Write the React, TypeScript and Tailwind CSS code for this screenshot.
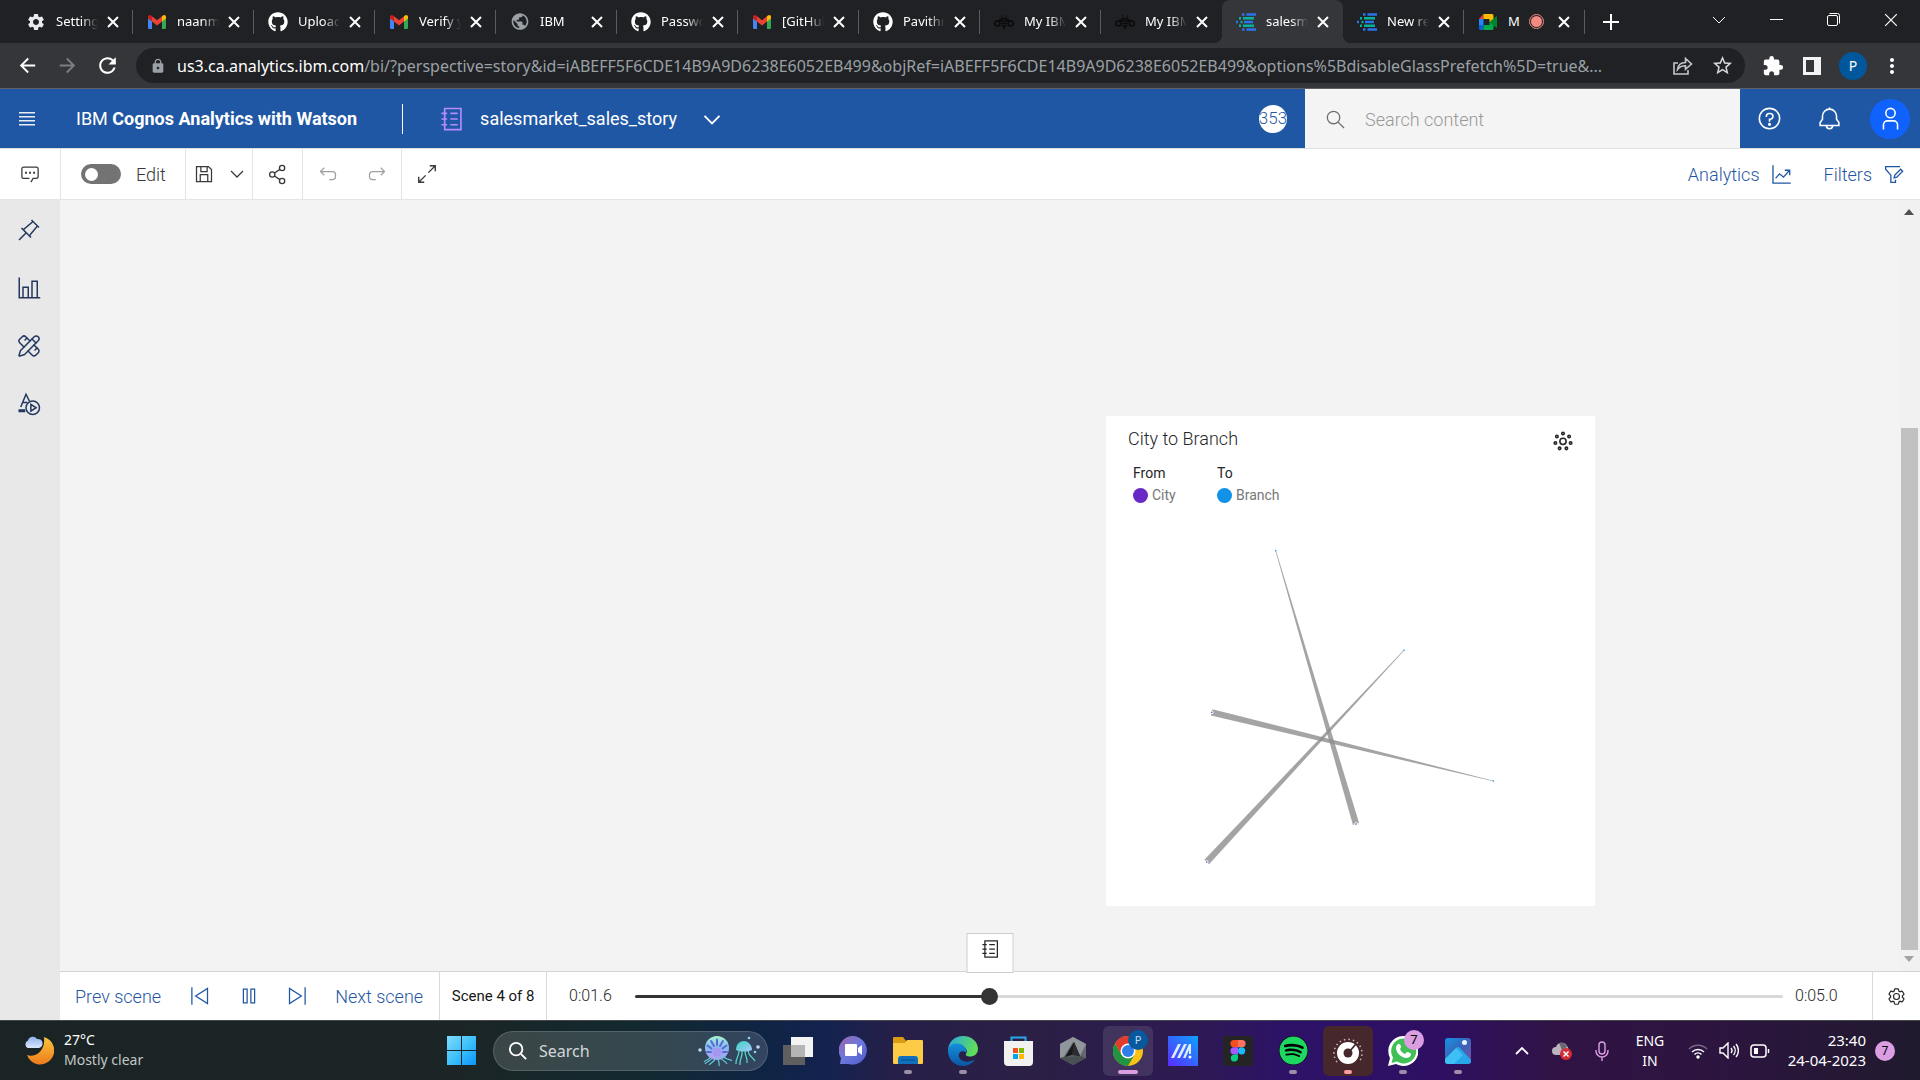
import type { ReactNode } from "react";
import { FaGithub, FaSpotify } from "react-icons/fa";
import { MdSettings, MdLock, MdExtension, MdStarBorder, MdMoreVert, MdRefresh, MdArrowBack, MdArrowForward, MdPublic } from "react-icons/md";
import { PencilRuler } from "lucide-react";

/* ---------- icon helpers ---------- */

function Line({ size = 20, w = 2, className = "", children }: { size?: number; w?: number; className?: string; children: ReactNode }) {
  return (
    <svg width={size} height={size} viewBox="0 0 32 32" fill="none" stroke="currentColor" strokeWidth={w} className={"shrink-0 " + className} aria-hidden="true">
      {children}
    </svg>
  );
}

function Close({ size = 12, w = 2 }: { size?: number; w?: number }) {
  return (
    <svg width={size} height={size} viewBox="0 0 12 12" stroke="currentColor" strokeWidth={w} aria-hidden="true">
      <path d="M1 1l10 10M11 1L1 11" />
    </svg>
  );
}

function GmailIcon() {
  return (
    <svg width="18" height="14" viewBox="0 0 18 14" aria-hidden="true">
      <path d="M0 3.5h4V14H1.2A1.2 1.2 0 0 1 0 12.8z" fill="#4285f4" />
      <path d="M14 3.5h4v9.3a1.2 1.2 0 0 1-1.2 1.2H14z" fill="#34a853" />
      <path d="M4 1.3l5 3.9 5-3.9v5.3L9 10.4 4 6.6z" fill="#ea4335" />
      <path d="M0 1.8C0 .2 1.9-.6 3.2.6L4 1.3v5.3L0 3.6z" fill="#c5221f" />
      <path d="M18 1.8C18 .2 16.1-.6 14.8.6L14 1.3v5.3l4-3z" fill="#fbbc04" />
    </svg>
  );
}

function BeeIcon() {
  return (
    <svg width="20" height="14" viewBox="0 0 20 14" fill="none" stroke="#0a0a0a" strokeWidth="1.5" aria-hidden="true">
      <path d="M7 1h1M12 1h1M7 3.5h6M6 6h8M7 8.5h6M7.5 11h5M9 13.2h2" strokeWidth="1.7" />
      <circle cx="3.3" cy="8.5" r="2.5" />
      <circle cx="16.7" cy="8.5" r="2.5" />
      <path d="M4 6l4-2M16 6l-4-2" />
    </svg>
  );
}

function CognosIcon() {
  return (
    <svg width="20" height="18" viewBox="0 0 20 18" fill="none" strokeWidth="2.4" aria-hidden="true">
      <path d="M6 1.5h2.5M10.5 1.5H20M0 9h2M8 9h9M6 16.5h2.5M10.5 16.5H20" stroke="#2c74ee" />
      <path d="M3 5.2h2M7 5.2h11M4.5 9h2M3 12.8h2M7 12.8h11" stroke="#05b39c" />
    </svg>
  );
}

function MeetIcon() {
  return (
    <svg width="18" height="16" viewBox="0 0 18 16" aria-hidden="true">
      <path d="M0 5l4.5-5v5z" fill="#ea4335" />
      <path d="M4.5 0H13a1.5 1.5 0 0 1 1.5 1.5V8h-4V5h-6z" fill="#fbbc04" />
      <path d="M0 5h4.5v6H0z" fill="#2684fc" />
      <path d="M0 11h4.5v5h-3A1.5 1.5 0 0 1 0 14.5z" fill="#0066da" />
      <path d="M4.5 11h6V8h4v6.5A1.5 1.5 0 0 1 13 16H4.5z" fill="#00ac47" />
      <path d="M10.5 8L17 2.5c.5-.4 1 0 1 .5v10c0 .5-.5.9-1 .5z" fill="#00832d" />
    </svg>
  );
}

function StoryIcon({ size }: { size: number }) {
  return (
    <Line size={size}>
      <path d="M7 3h20v26H7z" />
      <path d="M3 9h7M3 16h7M3 23h7M14 9h9M14 16h9M14 23h9" />
    </Line>
  );
}

/* ---------- browser tabs ---------- */

const tabs: { icon: ReactNode; title: string; active?: boolean; recording?: boolean }[] = [
  { icon: <MdSettings size={20} className="text-[#e8eaed]" />, title: "Settings" },
  { icon: <GmailIcon />, title: "naanm" },
  { icon: <FaGithub size={20} />, title: "Upload" },
  { icon: <GmailIcon />, title: "Verify y" },
  { icon: <MdPublic size={21} className="text-[#9aa0a6]" />, title: "IBM" },
  { icon: <FaGithub size={20} />, title: "Passwo" },
  { icon: <GmailIcon />, title: "[GitHub" },
  { icon: <FaGithub size={20} />, title: "Pavithr" },
  { icon: <BeeIcon />, title: "My IBM" },
  { icon: <BeeIcon />, title: "My IBM" },
  { icon: <CognosIcon />, title: "salesm", active: true },
  { icon: <CognosIcon />, title: "New re" },
  { icon: <MeetIcon />, title: "M", recording: true },
];

function TabStrip() {
  return (
    <div className="flex h-[43px] bg-[#202124] pl-3 text-white">
      {tabs.map((t, i) => {
        const sep = !t.active && !tabs[i + 1]?.active;
        return (
          <div
            key={i}
            className={
              "flex w-[121px] shrink-0 items-center pl-[14px] " +
              (t.active
                ? "relative rounded-t-lg bg-[#35363a] before:absolute before:bottom-0 before:-left-2 before:size-2 before:bg-[radial-gradient(circle_at_0_0,#202124_8px,#35363a_8px)] after:absolute after:-right-2 after:bottom-0 after:size-2 after:bg-[radial-gradient(circle_at_100%_0,#202124_8px,#35363a_8px)]"
                : "")
            }
          >
            <span className="flex w-5 shrink-0 justify-center">{t.icon}</span>
            <span
              className={
                "ml-[10px] overflow-hidden text-[13px] whitespace-nowrap " +
                (t.recording ? "w-[13px]" : "w-[42px] [mask-image:linear-gradient(to_right,black_60%,transparent)]")
              }
            >
              {t.title}
            </span>
            {t.recording && (
              <span className="ml-2 flex size-[15px] shrink-0 items-center justify-center rounded-full border border-[#f28b82]">
                <span className="size-[11px] rounded-full bg-[#f28b82]" />
              </span>
            )}
            <button className={"flex shrink-0 " + (t.recording ? "ml-[14px]" : "ml-[9px]")} aria-label={"Close " + t.title}>
              <Close />
            </button>
            {sep && <span className="ml-auto h-6 w-px bg-[#5b5c60]" />}
          </div>
        );
      })}
      <button className="ml-[18px] flex items-center" aria-label="New tab">
        <svg width="16" height="16" viewBox="0 0 16 16" stroke="white" strokeWidth="2" aria-hidden="true">
          <path d="M8 0v16M0 8h16" />
        </svg>
      </button>
      <div className="ml-auto flex items-center gap-[44px] pr-[22px] pb-1">
        <button aria-label="Search tabs">
          <svg width="14" height="8" viewBox="0 0 14 8" fill="none" stroke="white" aria-hidden="true"><path d="M1 1l6 6 6-6" /></svg>
        </button>
        <button aria-label="Minimize">
          <svg width="13" height="2" viewBox="0 0 13 2" aria-hidden="true"><path d="M0 0h13v1H0z" fill="white" /></svg>
        </button>
        <button aria-label="Restore">
          <svg width="13" height="13" viewBox="0 0 13 13" fill="none" stroke="white" aria-hidden="true">
            <rect x=".5" y="2.5" width="10" height="10" rx="1.5" />
            <path d="M2.5 .5h8a2 2 0 0 1 2 2v8" />
          </svg>
        </button>
        <button aria-label="Close window"><Close size={14} w={1} /></button>
      </div>
    </div>
  );
}

function AddressBar() {
  return (
    <div className="flex h-[46px] items-center border-b border-[#5f6063] bg-[#35363a] pr-4 pl-4 text-white">
      <button aria-label="Back"><MdArrowBack size={23} /></button>
      <button className="ml-[17px] text-[#7d7e82]" aria-label="Forward"><MdArrowForward size={23} /></button>
      <button className="ml-4" aria-label="Reload"><MdRefresh size={25} /></button>
      <div className="ml-4 flex h-[35px] min-w-0 flex-1 items-center rounded-full bg-[#202124] pr-[11px] pl-[14px]">
        <MdLock size={16} className="shrink-0 text-[#9aa0a6]" />
        <span className="ml-[11px] min-w-0 flex-1 truncate text-[16px] text-[#9aa0a6]">
          <span className="text-white">us3.ca.analytics.ibm.com</span>
          /bi/?perspective=story&amp;id=iABEFF5F6CDE14B9A9D6238E6052EB499&amp;objRef=iABEFF5F6CDE14B9A9D6238E6052EB499&amp;options%5BdisableGlassPrefetch%5D=true&amp;...
        </span>
        <button className="ml-4 text-[#c4c7ca]" aria-label="Share page">
          <svg width="20" height="18" viewBox="0 0 20 18" fill="none" stroke="currentColor" strokeWidth="1.6" aria-hidden="true">
            <path d="M5 6H1v11h14v-4" />
            <path d="M4.5 12.5C5 8 8 5.5 12.5 5.5V1.500l6 5.500-6 5.300V8.800c-3.500 0-6 1-8 3.700z" />
          </svg>
        </button>
        <button className="ml-[18px] text-[#d5d7da]" aria-label="Bookmark"><MdStarBorder size={23} /></button>
      </div>
      <button className="ml-[17px]" aria-label="Extensions"><MdExtension size={22} /></button>
      <button className="ml-[19px]" aria-label="Side panel">
        <svg width="18" height="18" viewBox="0 0 18 18" aria-hidden="true"><path d="M0 0h18v18H0z" fill="#f1f3f4" /><path d="M3 3h8v12H3z" fill="#35363a" /></svg>
      </button>
      <button className="ml-[18px] flex size-7 items-center justify-center rounded-full bg-[#01579b] text-[14px]">P</button>
      <button className="ml-[13px]" aria-label="Menu"><MdMoreVert size={24} /></button>
    </div>
  );
}

/* ---------- application ---------- */

function AppHeader() {
  return (
    <header className="flex h-[60px] items-stretch border-b border-[#e0e0e0] bg-[#1f57a4] text-white">
      <button className="ml-[19px] flex items-center" aria-label="Open menu">
        <svg width="16" height="14" viewBox="0 0 16 14" aria-hidden="true" fill="white" opacity=".9">
          <path d="M0 0h16v1.5H0zM0 4h16v1.5H0zM0 8h16v1.5H0zM0 12h16v1.5H0z" />
        </svg>
      </button>
      <h1 className="ml-[41px] flex items-center text-[18px] whitespace-pre"><span>IBM </span><span className="font-bold">Cognos Analytics with Watson</span></h1>
      <span className="ml-[45px] h-[30px] w-px self-center bg-white" />
      <button className="ml-[36px] flex items-center">
        <span className="text-[#b58cff]"><StoryIcon size={26} /></span>
        <span className="ml-[15px] text-[18px]">salesmarket_sales_story</span>
        <Line size={20} w={3} className="ml-[25px]"><path d="M4 11l12 12 12-12" /></Line>
      </button>
      <span className="mr-[18px] ml-auto flex size-7 items-center justify-center self-center overflow-hidden rounded-full bg-white text-[17px] font-light text-[#1f57a4]">353</span>
      <label className="flex w-[435px] items-center bg-[#f4f4f4] pt-[2px] pl-5 text-[#6f6f6f]">
        <Line size={21} w={2}><circle cx="13" cy="13" r="9.5" /><path d="M20 20l9 9" /></Line>
        <input aria-label="Search content" placeholder="Search content" className="ml-[19px] min-w-0 flex-1 bg-transparent text-[18px] font-light outline-none placeholder:text-[#999999]" />
      </label>
      <button className="ml-[17px] flex items-center" aria-label="Help">
        <Line size={25}>
          <circle cx="16" cy="16" r="13" />
          <path d="M12 14v-1a3.5 3.5 0 0 1 3.5-3.5h1.2a3.5 3.5 0 0 1 0 7.5H16v3" />
          <circle cx="16" cy="23.5" r="1" fill="currentColor" />
        </Line>
      </button>
      <button className="ml-[35px] flex items-center" aria-label="Notifications">
        <Line size={25}>
          <path d="M16 2v3M4 25v-4l3-4v-4a9 9 0 0 1 18 0v4l3 4v4zM12 25a4 4 0 0 0 8 0" />
        </Line>
      </button>
      <button className="mr-[10px] ml-[28px] flex size-10 items-center justify-center self-center rounded-full bg-[#0f62fe]" aria-label="Account">
        <Line size={25}><circle cx="16" cy="9" r="6" /><path d="M7 30v-6a5 5 0 0 1 5-5h8a5 5 0 0 1 5 5v6" /></Line>
      </button>
    </header>
  );
}

function Toolbar() {
  return (
    <div className="flex h-[51px] items-stretch border-b border-[#e4e4e4] bg-white text-[#393939]">
      <button className="flex w-[60px] items-center justify-center" aria-label="Comments">
        <Line size={20}>
          <path d="M17.5 29L21 23h5a3 3 0 0 0 3-3V8a3 3 0 0 0-3-3H6a3 3 0 0 0-3 3v12a3 3 0 0 0 3 3h9" />
          <path d="M8 14h3M14.5 14h3M21 14h3" strokeWidth="3" />
        </Line>
      </button>
      <label className="flex w-[125px] items-center border-l border-[#e4e4e4] pl-5 text-[18px] font-light">
        <input
          type="checkbox"
          role="switch"
          className="flex h-5 w-10 appearance-none items-center rounded-full bg-[#737373] pl-1 before:size-[13px] before:rounded-full before:bg-white"
        />
        <span className="ml-[15px]">Edit</span>
      </label>
      <div className="flex w-[67px] items-center border-l border-[#e4e4e4] pl-2">
        <button aria-label="Save">
          <Line size={20}><path d="M4 4h19l5 5v19H4zM11 4v8h10V4M10 28V17h12v11" /></Line>
        </button>
        <button className="ml-[15px]" aria-label="Save options">
          <Line size={16} w={2.5}><path d="M4 10l12 12 12-12" /></Line>
        </button>
      </div>
      <button className="flex w-[50px] items-center justify-center border-l border-[#e4e4e4]" aria-label="Share">
        <Line size={21}>
          <circle cx="8" cy="16" r="4" /><circle cx="23" cy="6" r="4" /><circle cx="23" cy="26" r="4" />
          <path d="M11.3 13.8l8.4-5.6M11.3 18.2l8.4 5.6" />
        </Line>
      </button>
      <div className="flex w-[99px] items-center border-l border-[#e4e4e4] pl-[15px] text-[#a0a0a0]">
        <button aria-label="Undo"><Line size={20}><path d="M10 6L4 12l6 6M4 12h19a5 5 0 0 1 5 5v3a5 5 0 0 1-5 5h-5" /></Line></button>
        <button className="ml-[29px]" aria-label="Redo"><Line size={20}><path d="M22 6l6 6-6 6M28 12H9a5 5 0 0 0-5 5v3a5 5 0 0 0 5 5h5" /></Line></button>
      </div>
      <button className="flex w-[51px] items-center justify-center border-l border-[#e4e4e4]" aria-label="Full screen">
        <Line size={22}><path d="M20 4h8v8M28 4L18 14M4 20v8h8M4 28l10-10" /></Line>
      </button>
      <button className="ml-auto flex items-center text-[18px] font-light text-[#1f57a4]">
        Analytics
        <Line size={21} className="ml-[11px]"><path d="M3 2v27h27M7 22l6-7 6 5 9-10M21 9.5h7.500V17" /></Line>
      </button>
      <button className="mr-4 ml-[32px] flex items-center text-[18px] font-light text-[#1f57a4]">
        Filters
        <Line size={21} className="ml-[11px]">
          <path d="M26 4H4v4l8 9v11h7v-4" />
          <path d="M17 21l1-4L27 8l3 3-9 9z" />
        </Line>
      </button>
    </div>
  );
}

function Rail() {
  return (
    <nav className="flex w-[60px] shrink-0 flex-col items-center gap-[34px] bg-[#e8e8e8] pt-[18px] pr-[2px] text-[#22375e]">
      <button className="flex h-6 items-center" aria-label="Pin">
        <svg width="24" height="24" viewBox="0 0 32 32" fill="currentColor" aria-hidden="true">
          <path d="M28.59 13.31L30 11.9 20 2l-1.31 1.42 1.18 1.18-11.49 9.72-1.72-1.71L5.25 14l5.66 5.68L2 28.58 3.41 30l8.91-8.91L18 26.75l1.39-1.42-1.71-1.71 9.72-11.49zM16.26 22.2L9.8 15.74 21.29 6 26 10.71z" />
        </svg>
      </button>
      <button className="flex h-6 items-center" aria-label="Visualizations">
        <Line size={24}><path d="M3 2v27h28M8 29V15h7v14M20 29V7h7v22" /></Line>
      </button>
      <button className="flex h-6 items-center" aria-label="Widgets"><PencilRuler size={24} strokeWidth={1.5} /></button>
      <button className="flex h-6 items-center" aria-label="Animations">
        <Line size={24}>
          <path d="M5 20L12 3l4.5 9M8 14h6" />
          <path d="M2 25h9" strokeWidth="4" />
          <circle cx="21" cy="21" r="9" /><path d="M18.5 16.5v9l7-4.5z" />
        </Line>
      </button>
    </nav>
  );
}

const links = [
  { tip: [169.7, 134.7], base: [250, 408] },
  { tip: [298, 234.3], base: [100.7, 446] },
  { tip: [387.3, 365], base: [105.7, 296.3] },
];

function ChartCard() {
  return (
    <section className="relative flex h-[490px] w-[489px] flex-col bg-white">
      <div className="flex items-center justify-between pt-[9px] pr-[22px] pl-[22px] text-[18px] text-[#262626]">
        <h2 className="font-light">City to Branch</h2>
        <svg width="20" height="20" viewBox="0 0 32 32" fill="none" stroke="#262626" strokeWidth="2.5" aria-hidden="true" className="mt-1">
          <circle cx="16" cy="16.5" r="5" />
          {[0, 1, 2, 3, 4, 5, 6].map((i) => {
            const a = (i * 2 * Math.PI) / 7 - Math.PI / 2;
            return <circle key={i} cx={16 + 12.5 * Math.cos(a)} cy={16.5 + 12.5 * Math.sin(a)} r="2" />;
          })}
        </svg>
      </div>
      <div className="mt-[10px] flex pl-[27px] text-[14px] leading-[22px]">
        <div className="w-[84px]">
          <div className="text-[#262626]">From</div>
          <div className="flex items-center text-[#777777]"><span className="mr-1 size-[15px] rounded-full bg-[#6929c4]" />City</div>
        </div>
        <div>
          <div className="text-[#262626]">To</div>
          <div className="flex items-center text-[#777777]"><span className="mr-1 size-[15px] rounded-full bg-[#1192e8]" />Branch</div>
        </div>
      </div>
      <svg className="absolute inset-0" width="489" height="490" viewBox="0 0 489 490" role="img" aria-label="City to Branch network">
        {links.map(({ tip, base }, i) => {
          const dx = base[0] - tip[0];
          const dy = base[1] - tip[1];
          const l = Math.hypot(dx, dy);
          const nx = -dy / l;
          const ny = dx / l;
          const corners = [
            [tip[0] + nx * 0.3, tip[1] + ny * 0.3],
            [base[0] + nx * 3.2, base[1] + ny * 3.2],
            [base[0] - nx * 3.2, base[1] - ny * 3.2],
            [tip[0] - nx * 0.3, tip[1] - ny * 0.3],
          ];
          return (
            <g key={i}>
              <polygon points={corners.map((c) => c.join(",")).join(" ")} fill="#8d8d8d" opacity=".8" />
              <circle cx={base[0]} cy={base[1]} r="1.8" fill="white" />
              <circle cx={base[0]} cy={base[1]} r=".8" fill="#6929c4" />
              <circle cx={tip[0]} cy={tip[1]} r=".8" fill="#1192e8" />
            </g>
          );
        })}
      </svg>
    </section>
  );
}

function Player() {
  return (
    <div className="flex h-[49px] items-stretch border-t border-[#d4d4d4] bg-white text-[#1f57a4]">
      <button className="ml-[15px] text-[18px] font-light">Prev scene</button>
      <button className="ml-[29px] flex items-center" aria-label="Previous"><Line size={20}><path d="M3 2v28M28 4v24L9 16z" /></Line></button>
      <button className="ml-[29px] flex items-center" aria-label="Pause"><Line size={20}><path d="M7 5h6v22H7zM19 5h6v22h-6z" /></Line></button>
      <button className="ml-[28px] flex items-center" aria-label="Next"><Line size={20}><path d="M29 2v28M4 4v24l19-12z" /></Line></button>
      <button className="mr-4 ml-[28px] text-[18px] font-light">Next scene</button>
      <span className="flex w-[108px] items-center justify-center border-x border-[#d9d9d9] text-[15px] whitespace-nowrap text-[#161616]">Scene 4 of 8</span>
      <span className="ml-[22px] flex w-[66px] items-center text-[16px] font-light text-[#262626]">0:01.6</span>
      <input
        type="range"
        aria-label="Timeline"
        min={0}
        max={5}
        step={0.01}
        defaultValue={1.53}
        className="h-[3px] min-w-0 flex-1 appearance-none self-center rounded-full bg-[linear-gradient(to_right,#333333_31%,#d8d8d8_31%)] [&::-webkit-slider-thumb]:size-[17px] [&::-webkit-slider-thumb]:appearance-none [&::-webkit-slider-thumb]:rounded-full [&::-webkit-slider-thumb]:bg-[#333333]"
      />
      <span className="ml-3 flex w-[77px] items-center text-[16px] font-light text-[#262626]">0:05.0</span>
      <button className="flex w-[48px] items-center justify-center border-l border-[#d9d9d9] text-[#262626]" aria-label="Settings">
        <svg width="19" height="19" viewBox="0 0 32 32" fill="currentColor" aria-hidden="true">
          <path d="M27,16.76c0-.25,0-.5,0-.76s0-.51,0-.77l1.92-1.68A2,2,0,0,0,29.3,11L26.94,7a2,2,0,0,0-1.73-1,2,2,0,0,0-.64.1l-2.43.82a11.35,11.35,0,0,0-1.31-.75l-.51-2.52a2,2,0,0,0-2-1.61H13.64a2,2,0,0,0-2,1.61l-.51,2.52a11.48,11.48,0,0,0-1.32.75L7.43,6.06A2,2,0,0,0,6.79,6,2,2,0,0,0,5.06,7L2.7,11a2,2,0,0,0,.41,2.51L5,15.24c0,.25,0,.5,0,.76s0,.51,0,.77L3.11,18.45A2,2,0,0,0,2.7,21L5.06,25a2,2,0,0,0,1.73,1,2,2,0,0,0,.64-.1l2.43-.82a11.35,11.35,0,0,0,1.31.75l.51,2.52a2,2,0,0,0,2,1.61h4.72a2,2,0,0,0,2-1.61l.51-2.52a11.48,11.48,0,0,0,1.32-.75l2.42.82a2,2,0,0,0,.64.1,2,2,0,0,0,1.73-1L29.3,21a2,2,0,0,0-.41-2.51ZM25.21,24l-3.43-1.16a8.86,8.86,0,0,1-2.71,1.57L18.36,28H13.64l-.71-3.55a9.36,9.36,0,0,1-2.7-1.57L6.79,24,4.43,20l2.72-2.4a8.9,8.9,0,0,1,0-3.13L4.43,12,6.79,8l3.43,1.16a8.86,8.86,0,0,1,2.71-1.57L13.64,4h4.72l.71,3.55a9.36,9.36,0,0,1,2.7,1.57L25.21,8,27.57,12l-2.72,2.4a8.9,8.9,0,0,1,0,3.13L27.57,20Z" />
          <path d="M16,22a6,6,0,1,1,6-6A5.94,5.94,0,0,1,16,22Zm0-10a3.91,3.91,0,0,0-4,4,3.91,3.91,0,0,0,4,4,3.91,3.91,0,0,0,4-4A3.91,3.91,0,0,0,16,12Z" />
        </svg>
      </button>
    </div>
  );
}

function Scrollbar() {
  return (
    <div className="flex w-5 shrink-0 flex-col items-center bg-[#f1f1f1] py-[9px] pr-[2px]">
      <svg width="10" height="6" viewBox="0 0 10 6" aria-hidden="true"><path d="M0 6l5-6 5 6z" fill="#505050" /></svg>
      <span className="grow-[213]" />
      <span className="w-[17px] grow-[523] bg-[#c1c1c1]" />
      <svg width="10" height="6" viewBox="0 0 10 6" className="mt-[6px]" aria-hidden="true"><path d="M0 0l5 6 5-6z" fill="#a3a3a3" /></svg>
    </div>
  );
}

/* ---------- taskbar ---------- */

function WeatherIcon() {
  return (
    <svg width="30" height="30" viewBox="0 0 30 30" aria-hidden="true">
      <defs>
        <linearGradient id="moon" x1="0" y1="0" x2="0" y2="1"><stop offset="0" stopColor="#f8c63c" /><stop offset="1" stopColor="#ee7a1c" /></linearGradient>
        <linearGradient id="cloud" x1="0" y1="0" x2="0" y2="1"><stop offset="0" stopColor="#8fb0f0" /><stop offset="1" stopColor="#dbe6fb" /></linearGradient>
      </defs>
      <path d="M20 2a14 14 0 1 1-17 18c8 3 19-4 17-18z" fill="url(#moon)" />
      <path d="M4 13a4 4 0 0 1 0-7.500A5 5 0 0 1 13 4a4.500 4.500 0 0 1 2 9z" fill="url(#cloud)" />
    </svg>
  );
}

function JellyIcon() {
  return (
    <svg width="62" height="32" viewBox="0 0 62 32" fill="none" aria-hidden="true">
      <defs>
        <linearGradient id="jelly" x1="0" y1="0" x2="0" y2="1"><stop offset="0" stopColor="#a5f5cf" /><stop offset=".45" stopColor="#86bdf5" /><stop offset="1" stopColor="#b99af2" /></linearGradient>
        <linearGradient id="jelly2" x1="0" y1="0" x2="1" y2="1"><stop offset="0" stopColor="#39d5bd" /><stop offset="1" stopColor="#a8c8ff" /></linearGradient>
      </defs>
      <circle cx="19" cy="13" r="12" fill="url(#jelly)" />
      <path d="M19 10V4.500M16 11l-3-5M13.500 13.500l-4-3M13 17H9M22 11l3-5M24.500 13.500l4-3M25 17h4" stroke="#5a6bcf" strokeWidth="2" strokeLinecap="round" />
      <circle cx="19" cy="17" r="4.5" fill="#a98cf0" opacity=".7" />
      <path d="M14 23c-2 4-5 3-7 6M17 23c0 4-4 4-6 7M20 22c0 5 2 6 1 9M22 21c2 6 5 4 7 8M25 20c2 6 7 3 9 6M12 22c-1 4-4 2-6 5" stroke="#63c9dd" strokeWidth="1.2" />
      <path d="M38 15c0-6 4-9 8-9s8 4 8 9c-5 2-11 2-16 0z" fill="url(#jelly2)" />
      <path d="M41 16c0 6-4 8-3 13M44 16c1 6-3 9-2 14M47 16c0 6 3 7 2 12M50 16c1 6 5 6 7 10" stroke="#56dccb" strokeWidth="1.2" />
      <circle cx="2" cy="15" r="1.8" fill="#b8dcf5" /><circle cx="60" cy="12" r="1.8" fill="#b8dcf5" /><circle cx="51" cy="3" r="1.3" fill="#91cfe8" /><circle cx="57" cy="17" r="1.3" fill="#91cfe8" />
    </svg>
  );
}

function WhatsAppIcon() {
  return (
    <svg width="30" height="30" viewBox="0 0 30 30" aria-hidden="true">
      <path d="M15 0a15 15 0 1 1-7 28L0 30l2-8A15 15 0 0 1 15 0z" fill="white" />
      <path d="M15 2.5a12.5 12.5 0 1 1-6 23L3.5 27 5 21.5A12.5 12.5 0 0 1 15 2.5z" fill="#43bf58" />
      <path d="M10 8c2-1 3 2 3 3s-1 2-1 2c1 3 3 4 5 5l2-2c1 0 4 1 4 2 0 3-3 4-5 4-6-1-10-6-10-10 0-2 1-3 2-4z" fill="white" />
    </svg>
  );
}

function Pill({ color = "bg-[#9b8ea9]", wide = false }: { color?: string; wide?: boolean }) {
  return <span className={"absolute bottom-[6px] left-1/2 h-1 -translate-x-1/2 rounded-full " + (wide ? "w-5 " : "w-2 ") + color} />;
}

const apps: { name: string; icon: ReactNode; mark?: ReactNode; box?: string; badge?: ReactNode }[] = [
  {
    name: "Task view",
    icon: (
      <svg width="30" height="28" viewBox="0 0 30 28" aria-hidden="true">
        <path d="M8 0h22v20H8z" fill="#f3f3f3" /><path d="M0 8h22v20H0z" fill="#5f5f5f" /><path d="M8 8h14v12H8z" fill="#b5b5b5" />
      </svg>
    ),
  },
  {
    name: "Chat",
    icon: (
      <svg width="29" height="29" viewBox="0 0 29 29" aria-hidden="true">
        <defs><linearGradient id="chat" x1="0" y1="0" x2="1" y2="1"><stop offset="0" stopColor="#a066a8" /><stop offset=".5" stopColor="#6b78dd" /><stop offset="1" stopColor="#5059c9" /></linearGradient></defs>
        <path d="M14.5 0a14.3 14.3 0 1 1-5 28H1l1-6A14.3 14.3 0 0 1 14.5 0z" fill="url(#chat)" />
        <rect x="6" y="8" width="12" height="12" rx="1" fill="white" /><path d="M19 12l4-3v10l-4-3z" fill="white" />
      </svg>
    ),
  },
  {
    name: "File Explorer",
    mark: <Pill />,
    icon: (
      <svg width="30" height="27" viewBox="0 0 30 27" aria-hidden="true">
        <path d="M0 1a1 1 0 0 1 1-1h9l3 4v3H0z" fill="#dc9c12" />
        <path d="M0 6l12 0 2-3h15a1 1 0 0 1 1 1v22a1 1 0 0 1-1 1H1a1 1 0 0 1-1-1z" fill="#fdcb45" />
        <path d="M5 27v-5a3 3 0 0 1 3-3h14a3 3 0 0 1 3 3v5z" fill="#1070bd" /><path d="M8 23h14" stroke="#0a4a8a" />
      </svg>
    ),
  },
  {
    name: "Edge",
    mark: <Pill />,
    icon: (
      <svg width="30" height="30" viewBox="0 0 30 30" aria-hidden="true">
        <defs>
          <linearGradient id="edge1" x1="0" y1="0" x2="1" y2=".3"><stop offset="0" stopColor="#29a6e8" /><stop offset="1" stopColor="#5fdc5a" /></linearGradient>
          <linearGradient id="edge2" x1="0" y1="0" x2="0" y2="1"><stop offset="0" stopColor="#1590dc" /><stop offset="1" stopColor="#0b54a4" /></linearGradient>
        </defs>
        <path d="M0 14C1 5 7 0 15 0c9 0 15 6 15 13 0 5-4 7.500-8 7.500-3 0-5-1-4-2.500 2-3 0-8-6-8C7 10 1 11 0 14z" fill="url(#edge1)" />
        <path d="M0 15C0 10 4 7.500 9 7.500c6 0 10 4 9 9-4-3-8 0-7 4 1 5 8 7 16 3-3 4-7 6.500-12 6.500C6 30 0 23 0 15z" fill="url(#edge2)" />
      </svg>
    ),
  },
  {
    name: "Microsoft Store",
    icon: (
      <svg width="29" height="30" viewBox="0 0 29 30" aria-hidden="true">
        <path d="M7.5 7V1.500h14V7" fill="none" stroke="#28a8ea" strokeWidth="2" />
        <path d="M0 5h29v21a4 4 0 0 1-4 4H4a4 4 0 0 1-4-4z" fill="#f1f1f1" />
        <path d="M9 12h5v5H9z" fill="#f25022" /><path d="M15 12h5v5h-5z" fill="#7fba00" /><path d="M9 18h5v5H9z" fill="#00a4ef" /><path d="M15 18h5v5h-5z" fill="#ffb900" />
      </svg>
    ),
  },
  {
    name: "Crystal",
    icon: (
      <svg width="26" height="28" viewBox="0 0 26 28" aria-hidden="true">
        <path d="M13 0l13 7v14l-13 7L0 21V7z" fill="#63696e" />
        <path d="M13 0l13 7-6 12L13 5 3 21l-3 0V7z" fill="#90969b" />
        <path d="M0 21l3-1 17-1 6 2-13 7z" fill="#4a4f54" />
        <path d="M14 5l6 14-8-1-7 2z" fill="#191a1e" /><path d="M14 5l6 14-8-1z" fill="#2b2d32" />
      </svg>
    ),
  },
  {
    name: "Chrome",
    box: "bg-white/10",
    mark: <Pill wide color="bg-[#dc9ee3]" />,
    badge: <span className="absolute top-[9px] right-[5px] flex size-5 items-center justify-center rounded-full bg-[#07589c] text-[11px] text-[#c9dcf0]">P</span>,
    icon: (
      <svg width="30" height="30" viewBox="0 0 30 30" aria-hidden="true">
        <circle cx="15" cy="15" r="15" fill="#fbc116" />
        <path d="M2 7.500a15 15 0 0 1 26 0H15L8.500 18.700z" fill="#e33b2e" />
        <path d="M2 7.500A15 15 0 0 0 15 30l6.500-11.200H8.500z" fill="#229342" />
        <circle cx="15" cy="15" r="7.5" fill="white" /><circle cx="15" cy="15" r="6" fill="#2f7de9" />
      </svg>
    ),
  },
  {
    name: "MyASUS",
    icon: (
      <svg width="30" height="30" viewBox="0 0 30 30" aria-hidden="true">
        <defs><linearGradient id="asus" x1="0" y1="1" x2="1" y2="0"><stop offset="0" stopColor="#5a2bff" /><stop offset="1" stopColor="#0da2ff" /></linearGradient></defs>
        <path d="M0 0h30v30H0z" fill="url(#asus)" />
        <path d="M3 22L10 8h3L6 22zM9 22l7-14h3l-7 14zM15 22l6-14h2v10h-2v-4l-3.500 8z" fill="#dfe9ff" /><circle cx="22" cy="21" r="1.5" fill="white" />
      </svg>
    ),
  },
  {
    name: "Figma",
    icon: (
      <svg width="30" height="30" viewBox="0 0 30 30" aria-hidden="true">
        <rect width="30" height="30" rx="2" fill="#242424" />
        <path d="M15 4h-4a3.600 3.600 0 0 0 0 7.200h4z" fill="#f24e1e" /><path d="M15 4h4a3.600 3.600 0 0 1 0 7.200h-4z" fill="#ff7262" />
        <path d="M15 11.200h-4a3.600 3.600 0 0 0 0 7.200h4z" fill="#a259ff" /><circle cx="18.6" cy="14.8" r="3.6" fill="#1abcfe" />
        <path d="M15 18.400h-4a3.600 3.600 0 1 0 4 3.600z" fill="#0acf83" />
      </svg>
    ),
  },
  { name: "Spotify", mark: <Pill />, icon: <span className="rounded-full bg-black text-[#1ed760]"><FaSpotify size={29} /></span> },
  {
    name: "Dial",
    box: "bg-[#46272c]",
    mark: <Pill color="bg-[#ff9aa2]" />,
    icon: (
      <svg width="30" height="30" viewBox="0 0 30 30" aria-hidden="true">
        <path d="M4 26a14 14 0 1 1 22 0" fill="none" stroke="#c9bcbc" strokeWidth="1.5" strokeDasharray="1.5 3" />
        <circle cx="15" cy="17" r="11" fill="white" /><circle cx="15" cy="17" r="4.5" fill="#46272c" /><path d="M16 16l7-8" stroke="#46272c" strokeWidth="1.8" />
      </svg>
    ),
  },
  {
    name: "WhatsApp",
    mark: <Pill />,
    badge: <span className="absolute top-[9px] right-[4px] flex size-5 items-center justify-center rounded-full bg-[#dc9ee3] text-[13px] text-black">7</span>,
    icon: <WhatsAppIcon />,
  },
  {
    name: "Photos",
    mark: <Pill />,
    icon: (
      <svg width="26" height="26" viewBox="0 0 26 26" aria-hidden="true">
        <defs><linearGradient id="photo" x1="0" y1="0" x2="1" y2="1"><stop offset="0" stopColor="#1593e4" /><stop offset=".5" stopColor="#3a63b8" /><stop offset="1" stopColor="#7550a8" /></linearGradient></defs>
        <rect width="26" height="26" rx="3" fill="url(#photo)" />
        <path d="M0 21L11 10a3 3 0 0 1 4 0l11 12a3 3 0 0 1-3 4H3a3 3 0 0 1-3-3z" fill="#28a6ea" /><path d="M0 21L11 10l7 7-9 9H3a3 3 0 0 1-3-3z" fill="#4fd2fa" opacity=".6" />
        <circle cx="19.5" cy="4.5" r="2.5" fill="#e8f4ff" />
      </svg>
    ),
  },
];

function Taskbar() {
  return (
    <footer className="flex h-[60px] items-center border-t border-[#46474d] bg-[linear-gradient(to_right,#1b2425_0%,#1b2526_24%,#12292f_33%,#0f2445_40%,#14224f_43%,#271f48_47%,#2b1f45_54%,#2d1a52_62%,#2d1268_67%,#2e0f62_75%,#301344_81%,#2c153f_90%,#201a2e_100%)] font-['Noto_Sans',sans-serif] text-[15px] text-white">
      <button className="ml-[24px] flex w-[423px] items-center pb-[2px] text-left">
        <WeatherIcon />
        <span className="ml-[10px] text-[14px] leading-5"><span className="block">27°C</span><span className="block text-[#c3c7c7]">Mostly clear</span></span>
      </button>
      <button aria-label="Start">
        <svg width="29" height="29" viewBox="0 0 29 29" aria-hidden="true">
          <defs><linearGradient id="win" x1="0" y1="0" x2="1" y2="1"><stop offset="0" stopColor="#7fdcff" /><stop offset=".5" stopColor="#3fc1fa" /><stop offset="1" stopColor="#0a94fb" /></linearGradient></defs>
          <path d="M0 0h14v14H0zM15 0h14v14H15zM0 15h14v14H0zM15 15h14v14H15z" fill="url(#win)" />
        </svg>
      </button>
      <label className="ml-[17px] flex h-10 w-[275px] items-center rounded-full border border-white/15 bg-white/15 pr-[7px] pl-[14px]">
        <Line size={20} w={3}><circle cx="13" cy="13" r="10" /><path d="M21 21l8 8" /></Line>
        <input aria-label="Search" placeholder="Search" className="ml-[11px] min-w-0 flex-1 bg-transparent text-[16px] outline-none placeholder:text-[#d3d7db]" />
        <JellyIcon />
      </label>
      <div className="ml-[5px] flex gap-[5px]">
        {apps.map((a) => (
          <button key={a.name} aria-label={a.name} className="relative flex h-[59px] w-[50px] items-center justify-center">
            <span className={"flex h-[50px] w-[50px] items-center justify-center rounded-md " + (a.box ?? "")}>{a.icon}</span>
            {a.badge}
            {a.mark}
          </button>
        ))}
      </div>
      <button className="ml-auto" aria-label="Hidden icons">
        <svg width="14" height="9" viewBox="0 0 14 9" fill="none" stroke="white" strokeWidth="1.8" aria-hidden="true"><path d="M1 8l6-6 6 6" /></svg>
      </button>
      <button className="ml-[23px]" aria-label="OneDrive">
        <svg width="20" height="19" viewBox="0 0 20 19" aria-hidden="true">
          <path d="M4 14a4 4 0 0 1 0-8 6 6 0 0 1 11-1c2 1 2 9 0 9z" fill="#b9b4bf" /><path d="M7 2a6 6 0 0 1 8 4l-5 3z" fill="#6c6675" />
          <circle cx="14" cy="13" r="6" fill="#d52b35" /><path d="M11.5 10.5l5 5M16.5 10.5l-5 5" stroke="white" strokeWidth="1.5" />
        </svg>
      </button>
      <button className="ml-[23px]" aria-label="Microphone">
        <svg width="14" height="20" viewBox="0 0 14 20" fill="none" stroke="#dc9ee3" strokeWidth="1.4" aria-hidden="true"><rect x="4" y="1" width="6" height="12" rx="3" /><path d="M1 9v1a6 6 0 0 0 12 0V9M7 16v4" /></svg>
      </button>
      <button className="ml-[26px] w-[30px] text-center text-[14px] leading-5">ENG<br />IN</button>
      <button className="ml-[23px] flex items-center gap-[11px]" aria-label="Network, sound and battery">
        <svg width="20" height="16" viewBox="0 0 20 16" fill="none" stroke="white" strokeWidth="1.5" aria-hidden="true">
          <path d="M1 6a12.5 12.5 0 0 1 18 0" opacity=".35" /><path d="M4 9a8.5 8.5 0 0 1 12 0M6.5 11.5a5 5 0 0 1 7 0" /><circle cx="10" cy="14" r="1" fill="white" />
        </svg>
        <svg width="20" height="17" viewBox="0 0 20 17" fill="none" stroke="white" strokeWidth="1.4" aria-hidden="true">
          <path d="M1 6h3l5-5v15l-5-5H1zM12 6a4 4 0 0 1 0 5M14.5 4a7 7 0 0 1 0 9M17 2a10 10 0 0 1 0 13" />
        </svg>
        <svg width="20" height="14" viewBox="0 0 20 14" fill="none" stroke="white" strokeWidth="1.5" aria-hidden="true"><rect x="1" y="1" width="15" height="12" rx="3" /><path d="M18.5 5v4" /><path d="M4 4h4v6H4z" fill="white" stroke="none" /></svg>
      </button>
      <button className="ml-[15px] w-[81px] pb-[2px] text-right leading-5 whitespace-nowrap">23:40<br />24-04-2023</button>
      <span className="mr-[25px] ml-[9px] flex size-5 items-center justify-center rounded-full bg-[#dc9ee3] text-[12px] text-black">7</span>
    </footer>
  );
}

export default function App() {
  return (
    <div className="flex min-h-screen flex-col overflow-x-hidden bg-[#f3f3f3] font-['Roboto',sans-serif]">
      <div className="font-['Noto_Sans',sans-serif]">
        <TabStrip />
        <AddressBar />
      </div>
      <AppHeader />
      <Toolbar />
      <div className="flex flex-1">
        <Rail />
        <div className="flex min-w-0 flex-1 flex-col">
          <div className="relative flex flex-1">
            <main className="flex flex-1 items-start justify-end bg-[#f3f3f3] pt-[216px] pr-[305px]">
              <ChartCard />
            </main>
            <Scrollbar />
            <button className="absolute -bottom-[2px] left-1/2 flex h-10 w-[47px] -translate-x-1/2 justify-center border border-[#cccccc] bg-white pt-[5px] text-[#262626]" aria-label="Scenes">
              <StoryIcon size={20} />
            </button>
          </div>
          <Player />
        </div>
      </div>
      <Taskbar />
    </div>
  );
}
